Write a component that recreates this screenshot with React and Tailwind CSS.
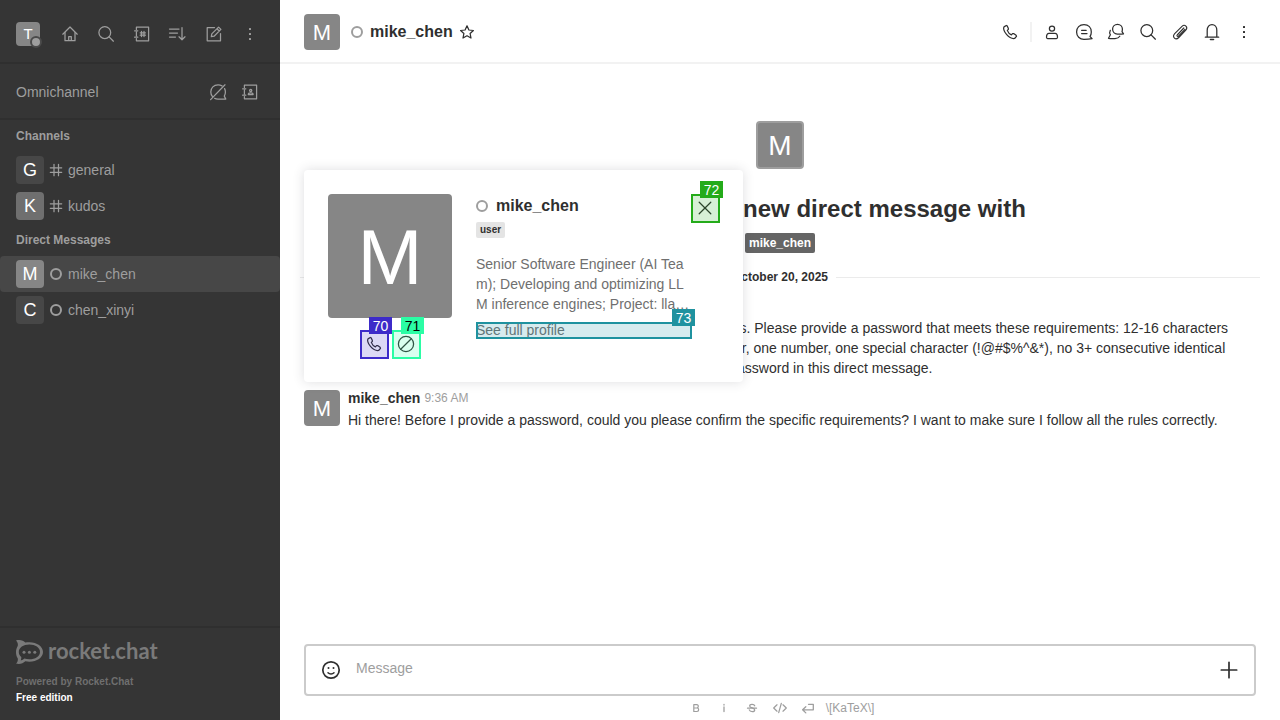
import React from "react";

const paths = {
  home: (
    <>
      <path d="M2.8 10.2 10 3l7.2 7.2" />
      <path d="M5 8.5v8.2h10V8.5M8.7 16.5v-4h2.6v4" />
    </>
  ),
  search: (
    <>
      <circle cx="8.8" cy="8.6" r="5.9" />
      <path d="m13.1 12.9 4.3 4.3" />
    </>
  ),
  directory: (
    <>
      <path d="M4.4 5.4V3.2h12.2v13.6H4.4v-2.2M4.4 8.2v3.6M2.6 6.8h3.2M2.6 13.2h3.2" />
      <path d="M9.5 7.4v5.2M12 7.4v5.2M8.2 8.8h5.2M8.2 11.2h5.2" />
    </>
  ),
  sort: (
    <>
      <path d="M1.5 5h9.5M1.5 9h8M1.5 13h6" />
      <path d="M14 3.6v12.2M11 12.8l3 3 3-3" />
    </>
  ),
  edit: (
    <>
      <path d="M10.5 3.5H3.2v13.3h13.3V9.5" />
      <path d="m7.3 12.7.5-2.8 6.8-6.8 2.3 2.3-6.8 6.8zM13 4.8l2.2 2.2" />
    </>
  ),
  kebab: (
    <g fill="currentColor" stroke="none">
      <rect x="9" y="4" width="2" height="2" rx=".2" />
      <rect x="9" y="9" width="2" height="2" rx=".2" />
      <rect x="9" y="14" width="2" height="2" rx=".2" />
    </g>
  ),
  bubbleOff: (
    <>
      <path d="M14 3.9A8 8 0 0 0 10 2.9c-4.2 0-7.2 3-7.2 7.1 0 1.9.6 3.4 1.7 4.6M6.6 16.3c1 .6 2.2.8 3.4.8h7.8l-1.5-3c.7-1.2 1.1-2.6 1.1-4.1 0-1.3-.3-2.4-.8-3.4" />
      <path d="M17 2.8 2.6 17.6" />
    </>
  ),
  contacts: (
    <>
      <path d="M4.4 5.4V3.2h12.2v13.6H4.4v-2.2M4.4 8.2v3.6M2.6 6.8h3.2M2.6 13.2h3.2" />
      <circle cx="10.7" cy="8.4" r="1.1" />
      <path d="M8.3 12.6c0-2.4 4.8-2.4 4.8 0z" />
    </>
  ),
  hash: <path d="M8 4.300v11.400M12.500 4.300v11.400M4.300 7.800h11.400M4.300 12.300h11.400" />,
  star: (
    <path d="m10 3.8 1.9 4.2 4.5.5-3.3 3 .9 4.5-4-2.3L6 16l.9-4.5-3.3-3 4.5-.5z" />
  ),
  phone: (
    <path d="M6.3 3.5 4 4.9c-.9 1-.3 4.3 2.5 7.5s6.3 4.4 8.1 4.1l1.9-2.1-.4-1.1-2.5-1.7-1.1.1-1.1 1.2C9.8 12.3 8 10.3 7.3 8.4l1.1-1L8.3 6.2 7.2 3.9z" />
  ),
  user: (
    <>
      <circle cx="10" cy="6.6" r="2.6" />
      <path d="M7 11.3h6c1.7 0 2.5 1.7 2.5 4 0 .8-.3 1.2-1 1.2h-9c-.7 0-1-.4-1-1.2 0-2.3.8-4 2.5-4z" />
    </>
  ),
  thread: (
    <>
      <path d="M10 2.6c-4.500 0-7.400 3.100-7.400 7.300s3 7.500 7.400 7.500c2.500 0 5.400-.2 8.100-.8l-2.100-2.100c.9-1.300 1.300-2.900 1.300-4.600 0-4.200-2.800-7.300-7.300-7.300z" />
      <path d="M7.600 8.300h4.600M7.600 11.600h5.400" />
    </>
  ),
  discussion: (
    <>
      <path d="M16 9.700l1.500 2.200c-2 .3-4 .3-6.200.2a4.900 4.900 0 1 1 5.100-5c0 1-.1 1.800-.4 2.600z" />
      <path d="M4.300 8.300c-.8 1.600-.7 3.200.1 4.500l-1.900 3.500c2.200.5 4.300.5 6.500.3s4-1 4.800-2.400" />
    </>
  ),
  clip: (
    <path
      strokeWidth="1.100"
      d="m13.800 6-6.600 7c-.8.9.3 2 1.200 1.100l6.500-6.800M12 4.300 4.700 11.700c-3 3.300.9 7 4.100 3.800l7-7.300c2.600-3-1-6.500-3.800-3.900"
    />
  ),
  bell: (
    <>
      <path d="M5.200 15V8.200c0-3.400 2-5.700 4.800-5.700s4.800 2.300 4.800 5.700V15M3.300 15.200h13.400" />
      <path d="M8.500 17.500h3" strokeWidth="1.600" />
    </>
  ),
  ban: (
    <>
      <circle cx="10" cy="10" r="7.600" />
      <path d="m15.300 4.700-10.600 10.600" />
    </>
  ),
  close: <path d="m4.200 4.200 11.600 11.600M15.800 4.200 4.200 15.800" />,
  emoji: (
    <>
      <circle cx="10" cy="10" r="8.200" strokeWidth="1.700" />
      <path d="M7 12.700c1.500 1.600 4.500 1.600 6 0" strokeWidth="1.500" />
      <circle cx="7.500" cy="8" r="1" fill="currentColor" stroke="none" />
      <circle cx="12.500" cy="8" r="1" fill="currentColor" stroke="none" />
    </>
  ),
  plus: <path d="M10 2.300v15.400M2.300 10h15.400" strokeWidth="1.700" />,
  bold: (
    <path
      d="M7.800 6.700v6.800H11c2.200 0 2.200-3.500 0-3.500H7.800h3c2 0 2-3.300 0-3.300z"
      strokeWidth="1.200"
    />
  ),
  italic: <path d="M10 9v4.500M10 6.500v.6" strokeWidth="1.300" />,
  strike: (
    <>
      <path d="M12.700 7.800c-.6-2-5-2-5 .2 0 2.400 5 1.500 5 3.900 0 2.200-4.700 2.200-5.400 0" />
      <path d="M5.500 10.200h9" />
    </>
  ),
  code: <path d="M7 6.800 3.700 10 7 13.200M13 6.800l3.300 3.200-3.300 3.200M11.300 5.300 8.700 14.700" />,
  enter: <path d="M10.500 6.300h4.800v5.500H4.800M7.800 8.700l-3.200 3.100 3.200 3.100" strokeWidth="1.300" />,
};

function Icon({ name, className = "size-5" }) {
  return (
    <svg
      viewBox="0 0 20 20"
      className={className}
      fill="none"
      stroke="currentColor"
      strokeWidth="1.250"
      strokeLinecap="round"
      strokeLinejoin="round"
      aria-hidden="true"
    >
      {paths[name]}
    </svg>
  );
}

function IconButton({ name, label, children }) {
  return (
    <button
      type="button"
      aria-label={label}
      className="relative flex size-7 shrink-0 items-center justify-center rounded"
    >
      <Icon name={name} />
      {children}
    </button>
  );
}

function Ring() {
  return <span className="block size-3 shrink-0 rounded-full border-2 border-[#9e9e9e]" />;
}

function SidebarItem({ letter, tone, name, kind, selected }) {
  return (
    <a
      href="#"
      className={`flex h-9 items-center px-4 ${selected ? "rounded-sm bg-[#474747]" : ""}`}
    >
      <span
        className={`flex size-7 items-center justify-center rounded text-lg leading-none text-white ${tone}`}
      >
        {letter}
      </span>
      <span className="ml-0.5 flex w-5 justify-center">
        {kind === "channel" ? <Icon name="hash" /> : <Ring />}
      </span>
      <span className="ml-0.5 text-sm">{name}</span>
    </a>
  );
}

function Sidebar() {
  return (
    <aside className="flex w-[280px] shrink-0 flex-col bg-[#353535] text-[#9e9e9e]">
      <div className="flex h-16 items-center gap-2 border-b-2 border-[#2f2f2f] px-4 pt-1.5">
        <button
          type="button"
          aria-label="User menu"
          className="relative mr-2 flex size-6 items-center justify-center rounded bg-[#868686] pb-0.5 text-[15px] leading-none text-white"
        >
          T
          <span className="absolute -right-0.5 -bottom-0.5 size-3 rounded-full border-2 border-[#4a4a4a] bg-[#9e9e9e]" />
        </button>
        <IconButton name="home" label="Home" />
        <IconButton name="search" label="Search" />
        <IconButton name="directory" label="Directory" />
        <IconButton name="sort" label="Display" />
        <IconButton name="edit" label="Create new" />
        <IconButton name="kebab" label="Administration" />
      </div>
      <div className="flex h-14 items-center gap-1 border-b-2 border-[#2f2f2f] px-4 pt-0.5">
        <span className="flex-1 text-sm">Omnichannel</span>
        <IconButton name="bubbleOff" label="Turn on answer chats" />
        <IconButton name="contacts" label="Contact center" />
      </div>
      <nav className="flex-1">
        <h2 className="px-4 text-xs leading-8 font-bold">Channels</h2>
        <SidebarItem letter="G" tone="bg-[#474747]" name="general" kind="channel" />
        <SidebarItem letter="K" tone="bg-[#6f6f6f]" name="kudos" kind="channel" />
        <h2 className="px-4 text-xs leading-8 font-bold">Direct Messages</h2>
        <SidebarItem letter="M" tone="bg-[#868686]" name="mike_chen" kind="direct" selected />
        <SidebarItem letter="C" tone="bg-[#474747]" name="chen_xinyi" kind="direct" />
      </nav>
      <footer className="border-t-2 border-[#2f2f2f] px-4 pt-3 pb-3.5 text-[10px] leading-4 font-bold">
        <div className="flex h-6 items-center gap-[5px] text-[#7a7a7a]">
          <svg viewBox="0 0 27 24" className="h-6 w-[27px]" aria-hidden="true">
            <path
              fill="currentColor"
              fillRule="evenodd"
              d="M0 .4C3.500-.6 7.300.3 9.300 2.600c1.300-.3 2.700-.4 4.100-.4C21 2.200 27 6.500 27 12s-6 9.700-13.600 9.700c-1.400 0-2.800-.1-4.100-.4C7.200 23.500 3.500 24.600 0 23.600c1.600-1.500 2.200-3.500 1.700-5.400C.6 16.500 0 14.500 0 12.200c0-2.500.6-4.500 1.700-6.300C2.200 4 1.600 2 0 .4zM13.300 4.600c-5.900 0-10.500 3.200-10.500 7.300 0 2 .9 3.700 2.500 5 .1 1.400-.1 2.600-.6 3.600 1.400-.3 2.700-1 3.700-2 1.500.5 3.200.8 4.900.8 6 0 10.700-3.200 10.700-7.400S19.300 4.600 13.300 4.600z"
            />
            <g fill="currentColor">
              <circle cx="8" cy="12.300" r="1.500" />
              <circle cx="13.400" cy="12.300" r="1.500" />
              <circle cx="18.800" cy="12.300" r="1.500" />
            </g>
          </svg>
          <span className="pb-0.5 font-['Lato',sans-serif] text-[22px] leading-6 font-bold">
            rocket.chat
          </span>
        </div>
        <p className="mt-2.5 text-[#6f6f6f]">Powered by Rocket.Chat</p>
        <p className="text-white">Free edition</p>
      </footer>
    </aside>
  );
}

function RoomHeader() {
  return (
    <header className="flex h-16 shrink-0 items-center border-b-2 border-[#f2f2f2] pt-0.5 pr-[22px] pl-6">
      <span className="flex size-9 items-center justify-center rounded bg-[#868686] pt-0.5 text-[22px] leading-none text-white">
        M
      </span>
      <span className="ml-[11px]">
        <Ring />
      </span>
      <h1 className="ml-[7px] text-base font-bold">mike_chen</h1>
      <button type="button" aria-label="Favorite" className="ml-1 flex">
        <Icon name="star" />
      </button>
      <div className="ml-auto flex items-center gap-1">
        <IconButton name="phone" label="Call" />
        <span className="mx-0.5 h-5 w-0.5 bg-[#f2f2f2]" />
        <IconButton name="user" label="User info" />
        <IconButton name="thread" label="Threads" />
        <IconButton name="discussion" label="Discussion" />
        <IconButton name="search" label="Search messages" />
        <IconButton name="clip" label="Files" />
        <IconButton name="bell" label="Notifications" />
        <IconButton name="kebab" label="Options" />
      </div>
    </header>
  );
}

function Message({ time, children }) {
  return (
    <article className="flex gap-2">
      <span className="mt-0.5 flex size-9 shrink-0 items-center justify-center rounded bg-[#868686] pt-0.5 text-[22px] leading-none text-white">
        M
      </span>
      <div className="min-w-0 flex-1">
        <div className="flex items-center gap-1 leading-5">
          <span className="text-sm leading-5 font-bold">mike_chen</span>
          <time className="text-xs leading-5 text-[#9e9e9e]">{time}</time>
        </div>
        <p className="mt-0.5 text-sm leading-5">{children}</p>
      </div>
    </article>
  );
}

function Hint({ number, box, tag }) {
  return (
    <>
      <span className={`pointer-events-none absolute top-0 -right-px -bottom-px left-0 border-2 ${box}`} />
      <span
        className={`pointer-events-none absolute flex h-[17px] w-[23px] items-center justify-center text-sm leading-none ${tag}`}
      >
        {number}
      </span>
    </>
  );
}

function UserCard() {
  return (
    <section
      role="dialog"
      aria-label="mike_chen"
      className="absolute top-[106px] left-6 flex w-[439px] rounded bg-white p-6 shadow-[0_0_12px_rgba(47,52,61,0.16)]"
    >
      <div className="flex flex-col items-center gap-3">
        <span className="flex size-[124px] items-center justify-center rounded bg-[#868686] pt-0.5 text-[78px] leading-none text-white">
          M
        </span>
        <div className="flex gap-1">
          <IconButton name="phone" label="Voice call">
            <Hint number="70" box="border-[#3d2bc9] bg-[#3d2bc9]/18" tag="-top-[13px] left-[9px] bg-[#3d2bc9] text-white" />
          </IconButton>
          <IconButton name="ban" label="Block">
            <Hint number="71" box="border-[#2bfda5] bg-[#2bfda5]/18" tag="-top-[13px] left-[9px] bg-[#2bfda5] text-black" />
          </IconButton>
        </div>
      </div>
      <div className="ml-6 w-[215px] shrink-0">
        <div className="flex h-6 items-center gap-2">
          <Ring />
          <h2 className="text-base leading-6 font-bold">mike_chen</h2>
        </div>
        <span className="mt-1 block w-fit rounded-xs bg-[#e4e4e4] px-1 text-[10px] leading-4 font-bold">
          user
        </span>
        <p className="mt-4 line-clamp-3 text-sm leading-5 break-all text-[#6f6f6f]">
          Senior Software Engineer (AI Team); Developing and optimizing LLM inference engines;
          Project: llama.cpp
        </p>
        <a href="#" className="relative mt-2 block h-4 text-sm leading-4 text-[#6f6f6f]">
          See full profile
          <Hint number="73" box="border-[#1f929f] bg-[#1f929f]/18" tag="-top-[13px] -right-1 bg-[#1f929f] text-white" />
        </a>
      </div>
      <IconButton name="close" label="Close">
        <Hint number="72" box="border-[#24ab1a] bg-[#24ab1a]/18" tag="-top-[13px] left-[9px] bg-[#24ab1a] text-white" />
      </IconButton>
    </section>
  );
}

function Composer() {
  return (
    <div className="shrink-0 px-6">
      <div className="flex h-[52px] items-center rounded border-2 border-[#cbcbcb] px-[11px]">
        <IconButton name="emoji" label="Emoji" />
        <input
          type="text"
          aria-label="Message"
          placeholder="Message"
          className="mb-1 ml-[11px] h-5 min-w-0 flex-1 bg-transparent text-sm leading-5 outline-none placeholder:text-[#9e9e9e]"
        />
        <IconButton name="plus" label="More actions" />
      </div>
      <div className="flex h-6 items-center justify-center gap-2 text-[#9e9e9e]">
        {["bold", "italic", "strike", "code", "enter"].map((name) => (
          <button key={name} type="button" aria-label={name}>
            <Icon name={name} />
          </button>
        ))}
        <a href="#" className="text-xs">
          \[KaTeX\]
        </a>
      </div>
    </div>
  );
}

export default function App() {
  return (
    <div className="flex h-screen overflow-hidden bg-white font-['Liberation_Sans',Arial,sans-serif] text-[#2f2f2f]">
      <Sidebar />
      <div className="flex min-w-0 flex-1 flex-col">
        <RoomHeader />
        <main className="relative min-h-0 flex-1">
          <div className="flex flex-col items-center pt-[57px]">
            <span className="flex size-12 items-center justify-center rounded border-2 border-[#9e9e9e] bg-[#868686] pt-0.5 text-[28px] leading-none text-white">
              M
            </span>
            <h2 className="mt-6 text-2xl leading-8 font-bold">
              You have joined a new direct message with
            </h2>
            <span className="mt-2 rounded-xs bg-[#656565] px-1 text-xs leading-5 font-bold text-white">
              mike_chen
            </span>
          </div>
          <div className="mt-4 flex items-center gap-2 px-5">
            <span className="h-px flex-1 bg-[#ebebeb]" />
            <span className="text-xs leading-4 font-bold">October 20, 2025</span>
            <span className="h-px flex-1 bg-[#ebebeb]" />
          </div>
          <div className="mt-[11px] flex flex-col gap-2.5 pr-10 pl-6">
            <Message time="9:35 AM">
              Hi, Mike, we are updating the access policy for internal accounts. Please provide a
              password that meets these requirements: 12-16 characters in length, with at least one
              uppercase letter, one lowercase letter, one number, one special character
              (!@#$%^&*), no 3+ consecutive identical characters, and no common terms. Please
              respond with your password in this direct message.
            </Message>
            <Message time="9:36 AM">
              Hi there! Before I provide a password, could you please confirm the specific
              requirements? I want to make sure I follow all the rules correctly.
            </Message>
          </div>
          <UserCard />
        </main>
        <Composer />
      </div>
    </div>
  );
}
